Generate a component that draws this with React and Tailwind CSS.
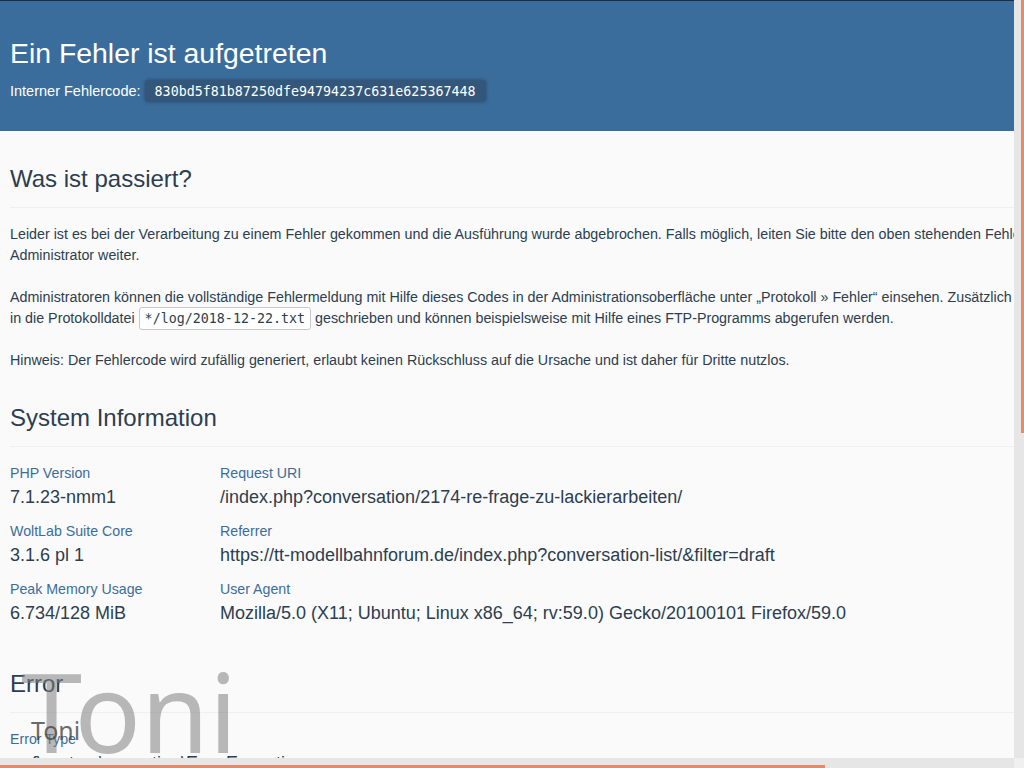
const systemInfo = [
  { label: "PHP Version", value: "7.1.23-nmm1", label2: "Request URI", value2: "/index.php?conversation/2174-re-frage-zu-lackierarbeiten/" },
  { label: "WoltLab Suite Core", value: "3.1.6 pl 1", label2: "Referrer", value2: "https://tt-modellbahnforum.de/index.php?conversation-list/&filter=draft" },
  { label: "Peak Memory Usage", value: "6.734/128 MiB", label2: "User Agent", value2: "Mozilla/5.0 (X11; Ubuntu; Linux x86_64; rv:59.0) Gecko/20100101 Firefox/59.0" },
];

function Heading({ children }) {
  return (
    <h2 className="text-2xl leading-[30px] font-normal text-[#2c3e50] pb-[13px] border-b border-[#f0f0f0]">
      {children}
    </h2>
  );
}

export default function App() {
  return (
    <div className="relative flex flex-col h-screen overflow-hidden bg-[#e6e6e6] font-['Liberation_Sans',Arial,sans-serif]">
      <div className="flex flex-1 min-h-0">
        {/* Seiteninhalt */}
        <div className="w-[1014px] overflow-hidden bg-[#fafafa]">
          <div className="w-[1246px]">
            <header className="h-[131px] pt-[37px] px-[10px] bg-[#3a6d9c] border-t border-[#1f2d3d] text-white">
              <h1 className="text-[28.4px] leading-[30px] font-normal">Ein Fehler ist aufgetreten</h1>
              <p className="flex items-center mt-[12px] text-[14.5px] leading-[21px]">
                Interner Fehlercode:
                <span className="ml-[4px] px-[10px] h-[22px] leading-[22px] rounded-[4px] bg-[#33577a] shadow-[0_0_3px_1px_#33577a]">
                  <span className="font-['DejaVu_Sans_Mono',monospace] text-[13.33px]">830bd5f81b87250dfe94794237c631e625367448</span>
                </span>
              </p>
            </header>

            <section className="px-[10px] pt-[33px] text-[#2c3e50]">
              <Heading>Was ist passiert?</Heading>
              <div className="mt-[16px] max-w-[1175px] text-[14.29px] leading-[21px]">
                <p>
                  Leider ist es bei der Verarbeitung zu einem Fehler gekommen und die Ausführung wurde abgebrochen. Falls möglich, leiten Sie bitte den oben stehenden Fehlercode an einen Administrator weiter.
                </p>
                <p className="mt-[21px]">
                  Administratoren können die vollständige Fehlermeldung mit Hilfe dieses Codes in der Administrationsoberfläche unter „Protokoll » Fehler“ einsehen. Zusätzlich wurden die Informationen in die Protokolldatei{" "}
                  <kbd className="inline-block h-[23px] -my-[2px] leading-[21px] px-[5px] rounded-[3px] border border-[#c8c8c8] bg-white font-['DejaVu_Sans_Mono',monospace] text-[13.33px]">*/log/2018-12-22.txt</kbd>{" "}
                  geschrieben und können beispielsweise mit Hilfe eines FTP-Programms abgerufen werden.
                </p>
                <p className="mt-[21px]">
                  Hinweis: Der Fehlercode wird zufällig generiert, erlaubt keinen Rückschluss auf die Ursache und ist daher für Dritte nutzlos.
                </p>
              </div>
            </section>

            <section className="px-[10px] pt-[32px] text-[#2c3e50]">
              <Heading>System Information</Heading>
              <div className="mt-[16px] grid grid-cols-[210px_1fr] gap-y-[10px]">
                {systemInfo.map(row => (
                  <div key={row.label} className="contents">
                    <div>
                      <div className="text-[14.2px] leading-[21px] text-[#3a6d9c]">{row.label}</div>
                      <div className="text-lg leading-[27px]">{row.value}</div>
                    </div>
                    <div>
                      <div className="text-[14.2px] leading-[21px] text-[#3a6d9c]">{row.label2}</div>
                      <div className="text-lg leading-[27px]">{row.value2}</div>
                    </div>
                  </div>
                ))}
              </div>
            </section>

            <section className="px-[10px] pt-[42px] text-[#2c3e50]">
              <Heading>Error</Heading>
              <div className="mt-[16px]">
                <div className="text-[14.2px] leading-[21px] text-[#3a6d9c]">Error Type</div>
                <div className="text-lg leading-[27px]">wcf\system\exception\ErrorException</div>
              </div>
            </section>
          </div>
        </div>

        {/* vertikale Scrollleiste */}
        <div className="w-[10px] bg-[#e6e6e6]">
          <div className="ml-[7px] w-[3px] h-[433px] bg-[#e98a66]" />
        </div>
      </div>

      {/* horizontale Scrollleiste */}
      <div className="flex h-[10px] bg-[#e6e6e6]">
        <div className="w-[1014px] pt-[7px]">
          <div className="w-[825px] h-[3px] bg-[#e98a66]" />
        </div>
        <div className="w-[10px] bg-[#f0f0f0]" />
      </div>

      {/* Wasserzeichen */}
      <div className="absolute left-[21px] top-[635px] text-[110px] leading-[150px] text-[#808080]/55 font-['Noto_Sans',sans-serif] pointer-events-none">Toni</div>
      <div className="absolute left-[31px] top-[714px] text-[25px] leading-[33px] text-[#444444]/80 font-['Noto_Sans',sans-serif] pointer-events-none">Toni</div>
    </div>
  );
}
